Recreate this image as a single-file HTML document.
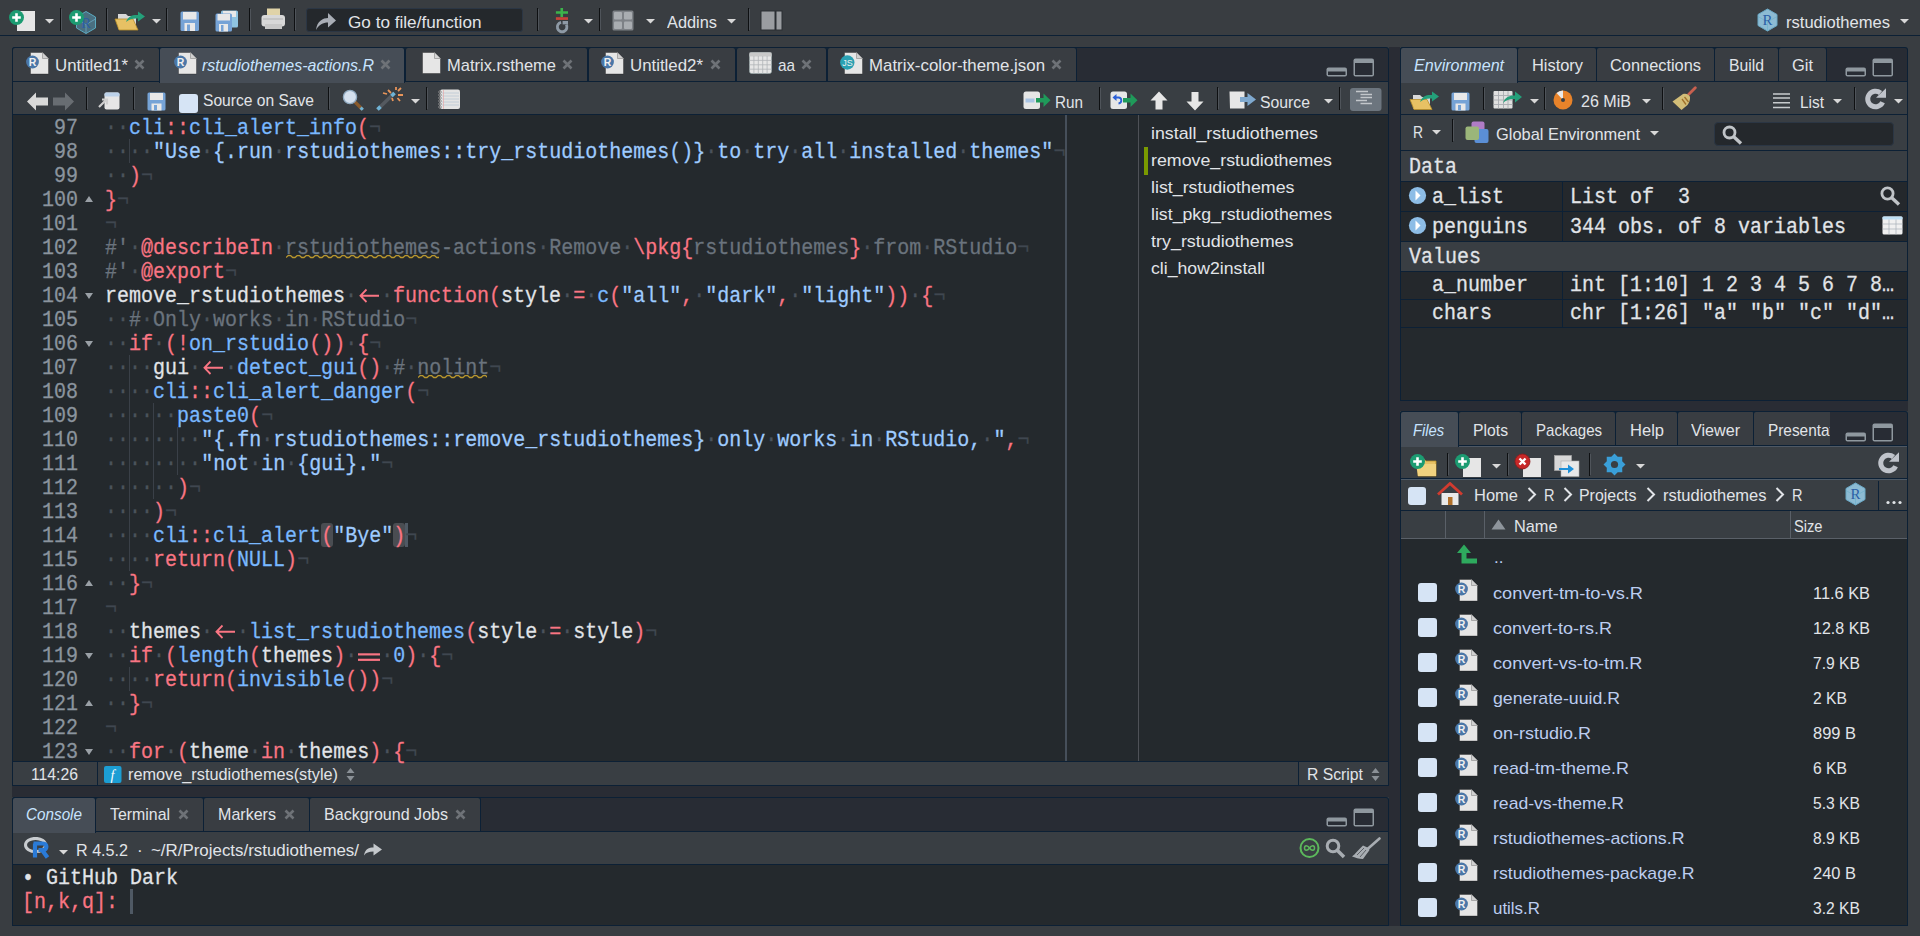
<!DOCTYPE html><html><head><meta charset="utf-8"><style>
*{margin:0;padding:0;box-sizing:border-box}
html,body{width:1920px;height:936px;overflow:hidden;background:#393d41}
body{position:relative;font-family:"Liberation Sans",sans-serif}
.a{position:absolute}
.tS{font-family:"Liberation Sans",sans-serif;white-space:pre;line-height:1}
.tM{font-family:"Liberation Mono",monospace;white-space:pre;line-height:1;transform:scaleY(1.09);transform-origin:0 17.3px;-webkit-text-stroke:0.25px currentColor}
.ln{position:absolute;z-index:1;height:24px;font-family:"Liberation Mono",monospace;font-size:20px;line-height:24px;padding-top:2px;white-space:pre;color:#e1e4e8;transform:scaleY(1.09);transform-origin:0 19px;-webkit-text-stroke:0.25px currentColor}
.w{color:#4a525b}
.r{color:#f97583}
.b{color:#79b8ff}
.s{color:#9ecbff}
.c{color:#6a737d}
.eol{color:#3f4750}
</style></head><body><div class="a" style="left:0px;top:35px;width:1920px;height:1px;background:#0c2035;"></div><div class="a" style="left:1389px;top:47px;width:11px;height:879px;background:#292c34;"></div><div class="a" style="left:12px;top:786px;width:1377px;height:11px;background:#292c34;"></div><div class="a" style="left:1400px;top:401px;width:508px;height:10px;background:#292c34;"></div><div class="a" style="left:12px;top:47px;width:1377px;height:739px;background:#0c2035;border-radius:3px 3px 0 0"></div><div class="a" style="left:13px;top:48px;width:1375px;height:33px;background:#282c34;border-radius:2px 2px 0 0"></div><div class="a" style="left:13px;top:82px;width:1375px;height:32px;background:#393e43;"></div><div class="a" style="left:13px;top:115px;width:1375px;height:646px;background:#24292d;"></div><div class="a" style="left:13px;top:762px;width:1375px;height:23px;background:#393e43;"></div><div class="a" style="left:12px;top:797px;width:1377px;height:129px;background:#0c2035;border-radius:3px 3px 0 0"></div><div class="a" style="left:13px;top:798px;width:1375px;height:33px;background:#282c34;border-radius:2px 2px 0 0"></div><div class="a" style="left:13px;top:832px;width:1375px;height:32px;background:#393e43;"></div><div class="a" style="left:13px;top:865px;width:1375px;height:60px;background:#24292d;"></div><div class="a" style="left:1400px;top:47px;width:508px;height:354px;background:#0c2035;border-radius:3px 3px 0 0"></div><div class="a" style="left:1401px;top:48px;width:506px;height:33px;background:#282c34;border-radius:2px 2px 0 0"></div><div class="a" style="left:1401px;top:82px;width:506px;height:32px;background:#393e43;"></div><div class="a" style="left:1401px;top:115px;width:506px;height:35px;background:#393e43;"></div><div class="a" style="left:1401px;top:151px;width:506px;height:249px;background:#24292d;"></div><div class="a" style="left:1400px;top:411px;width:508px;height:515px;background:#0c2035;border-radius:3px 3px 0 0"></div><div class="a" style="left:1401px;top:412px;width:506px;height:33px;background:#282c34;border-radius:2px 2px 0 0"></div><div class="a" style="left:1401px;top:447px;width:506px;height:31px;background:#393e43;"></div><div class="a" style="left:1401px;top:480px;width:506px;height:30px;background:#393e43;"></div><div class="a" style="left:1401px;top:511px;width:506px;height:27px;background:#393e43;"></div><div class="a" style="left:1401px;top:539px;width:506px;height:386px;background:#24292d;"></div><div class="a" style="left:1065px;top:115px;width:2px;height:646px;background:#464f5a;"></div><div class="a" style="left:1138px;top:115px;width:1px;height:646px;background:#4e5157;"></div><div class="ln" style="left:18px;top:115px;width:60px;text-align:right;color:#8b949e">97</div><div class="ln" style="left:105px;top:115px"><span class="w">·</span><span class="w">·</span><span class="b">cli</span><span class="r">::</span><span class="b">cli_alert_info</span><span class="r">(</span><span class="eol">¬</span></div><div class="ln" style="left:18px;top:139px;width:60px;text-align:right;color:#8b949e">98</div><div class="ln" style="left:105px;top:139px"><span class="w">·</span><span class="w">·</span><span class="w">·</span><span class="w">·</span><span class="s">&quot;Use</span><span class="w">·</span><span class="s">{.run</span><span class="w">·</span><span class="s">rstudiothemes::try_rstudiothemes()}</span><span class="w">·</span><span class="s">to</span><span class="w">·</span><span class="s">try</span><span class="w">·</span><span class="s">all</span><span class="w">·</span><span class="s">installed</span><span class="w">·</span><span class="s">themes&quot;</span><span class="eol">¬</span></div><div class="ln" style="left:18px;top:163px;width:60px;text-align:right;color:#8b949e">99</div><div class="ln" style="left:105px;top:163px"><span class="w">·</span><span class="w">·</span><span class="r">)</span><span class="eol">¬</span></div><div class="ln" style="left:18px;top:187px;width:60px;text-align:right;color:#8b949e">100</div><div class="ln" style="left:105px;top:187px"><span class="r">}</span><span class="eol">¬</span></div><div class="ln" style="left:18px;top:211px;width:60px;text-align:right;color:#8b949e">101</div><div class="ln" style="left:105px;top:211px"><span class="eol">¬</span></div><div class="ln" style="left:18px;top:235px;width:60px;text-align:right;color:#8b949e">102</div><div class="ln" style="left:105px;top:235px"><span class="c">#&#x27;</span><span class="w">·</span><span class="r">@describeIn</span><span class="w">·</span><span class="c">rstudiothemes-actions</span><span class="w">·</span><span class="c">Remove</span><span class="w">·</span><span class="r">\pkg{</span><span class="c">rstudiothemes</span><span class="r">}</span><span class="w">·</span><span class="c">from</span><span class="w">·</span><span class="c">RStudio</span><span class="eol">¬</span></div><div class="ln" style="left:18px;top:259px;width:60px;text-align:right;color:#8b949e">103</div><div class="ln" style="left:105px;top:259px"><span class="c">#&#x27;</span><span class="w">·</span><span class="r">@export</span><span class="eol">¬</span></div><div class="ln" style="left:18px;top:283px;width:60px;text-align:right;color:#8b949e">104</div><div class="ln" style="left:105px;top:283px">remove_rstudiothemes<span class="w">·</span><span style="display:inline-block;width:24px;height:24px;position:relative;vertical-align:top"><svg width="24" height="24" style="position:absolute;left:0px;top:0" viewBox="0 0 24 24"><path d="M3.5 11.3H22M9.5 5.6L3.5 11.3L9.5 17" stroke="#f97583" stroke-width="1.8" fill="none"/></svg></span><span class="w">·</span><span class="r">function</span><span class="r">(</span>style<span class="w">·</span><span class="r">=</span><span class="w">·</span><span class="b">c</span><span class="r">(</span><span class="s">&quot;all&quot;</span><span class="r">,</span><span class="w">·</span><span class="s">&quot;dark&quot;</span><span class="r">,</span><span class="w">·</span><span class="s">&quot;light&quot;</span><span class="r">)</span><span class="r">)</span><span class="w">·</span><span class="r">{</span><span class="eol">¬</span></div><div class="ln" style="left:18px;top:307px;width:60px;text-align:right;color:#8b949e">105</div><div class="ln" style="left:105px;top:307px"><span class="w">·</span><span class="w">·</span><span class="c">#</span><span class="w">·</span><span class="c">Only</span><span class="w">·</span><span class="c">works</span><span class="w">·</span><span class="c">in</span><span class="w">·</span><span class="c">RStudio</span><span class="eol">¬</span></div><div class="ln" style="left:18px;top:331px;width:60px;text-align:right;color:#8b949e">106</div><div class="ln" style="left:105px;top:331px"><span class="w">·</span><span class="w">·</span><span class="r">if</span><span class="w">·</span><span class="r">(</span><span class="r">!</span><span class="b">on_rstudio</span><span class="r">(</span><span class="r">)</span><span class="r">)</span><span class="w">·</span><span class="r">{</span><span class="eol">¬</span></div><div class="ln" style="left:18px;top:355px;width:60px;text-align:right;color:#8b949e">107</div><div class="ln" style="left:105px;top:355px"><span class="w">·</span><span class="w">·</span><span class="w">·</span><span class="w">·</span>gui<span class="w">·</span><span style="display:inline-block;width:24px;height:24px;position:relative;vertical-align:top"><svg width="24" height="24" style="position:absolute;left:0px;top:0" viewBox="0 0 24 24"><path d="M3.5 11.3H22M9.5 5.6L3.5 11.3L9.5 17" stroke="#f97583" stroke-width="1.8" fill="none"/></svg></span><span class="w">·</span><span class="b">detect_gui</span><span class="r">(</span><span class="r">)</span><span class="w">·</span><span class="c">#</span><span class="w">·</span><span class="c">nolint</span><span class="eol">¬</span></div><div class="ln" style="left:18px;top:379px;width:60px;text-align:right;color:#8b949e">108</div><div class="ln" style="left:105px;top:379px"><span class="w">·</span><span class="w">·</span><span class="w">·</span><span class="w">·</span><span class="b">cli</span><span class="r">::</span><span class="b">cli_alert_danger</span><span class="r">(</span><span class="eol">¬</span></div><div class="ln" style="left:18px;top:403px;width:60px;text-align:right;color:#8b949e">109</div><div class="ln" style="left:105px;top:403px"><span class="w">·</span><span class="w">·</span><span class="w">·</span><span class="w">·</span><span class="w">·</span><span class="w">·</span><span class="b">paste0</span><span class="r">(</span><span class="eol">¬</span></div><div class="ln" style="left:18px;top:427px;width:60px;text-align:right;color:#8b949e">110</div><div class="ln" style="left:105px;top:427px"><span class="w">·</span><span class="w">·</span><span class="w">·</span><span class="w">·</span><span class="w">·</span><span class="w">·</span><span class="w">·</span><span class="w">·</span><span class="s">&quot;{.fn</span><span class="w">·</span><span class="s">rstudiothemes::remove_rstudiothemes}</span><span class="w">·</span><span class="s">only</span><span class="w">·</span><span class="s">works</span><span class="w">·</span><span class="s">in</span><span class="w">·</span><span class="s">RStudio,</span><span class="w">·</span><span class="s">&quot;</span><span class="r">,</span><span class="eol">¬</span></div><div class="ln" style="left:18px;top:451px;width:60px;text-align:right;color:#8b949e">111</div><div class="ln" style="left:105px;top:451px"><span class="w">·</span><span class="w">·</span><span class="w">·</span><span class="w">·</span><span class="w">·</span><span class="w">·</span><span class="w">·</span><span class="w">·</span><span class="s">&quot;not</span><span class="w">·</span><span class="s">in</span><span class="w">·</span><span class="s">{gui}.&quot;</span><span class="eol">¬</span></div><div class="ln" style="left:18px;top:475px;width:60px;text-align:right;color:#8b949e">112</div><div class="ln" style="left:105px;top:475px"><span class="w">·</span><span class="w">·</span><span class="w">·</span><span class="w">·</span><span class="w">·</span><span class="w">·</span><span class="r">)</span><span class="eol">¬</span></div><div class="ln" style="left:18px;top:499px;width:60px;text-align:right;color:#8b949e">113</div><div class="ln" style="left:105px;top:499px"><span class="w">·</span><span class="w">·</span><span class="w">·</span><span class="w">·</span><span class="r">)</span><span class="eol">¬</span></div><div class="ln" style="left:18px;top:523px;width:60px;text-align:right;color:#8b949e">114</div><div class="ln" style="left:105px;top:523px"><span class="w">·</span><span class="w">·</span><span class="w">·</span><span class="w">·</span><span class="b">cli</span><span class="r">::</span><span class="b">cli_alert</span><span class="r">(</span><span class="s">&quot;Bye&quot;</span><span class="r">)</span><span class="eol">¬</span></div><div class="ln" style="left:18px;top:547px;width:60px;text-align:right;color:#8b949e">115</div><div class="ln" style="left:105px;top:547px"><span class="w">·</span><span class="w">·</span><span class="w">·</span><span class="w">·</span><span class="r">return</span><span class="r">(</span><span class="b">NULL</span><span class="r">)</span><span class="eol">¬</span></div><div class="ln" style="left:18px;top:571px;width:60px;text-align:right;color:#8b949e">116</div><div class="ln" style="left:105px;top:571px"><span class="w">·</span><span class="w">·</span><span class="r">}</span><span class="eol">¬</span></div><div class="ln" style="left:18px;top:595px;width:60px;text-align:right;color:#8b949e">117</div><div class="ln" style="left:105px;top:595px"><span class="eol">¬</span></div><div class="ln" style="left:18px;top:619px;width:60px;text-align:right;color:#8b949e">118</div><div class="ln" style="left:105px;top:619px"><span class="w">·</span><span class="w">·</span>themes<span class="w">·</span><span style="display:inline-block;width:24px;height:24px;position:relative;vertical-align:top"><svg width="24" height="24" style="position:absolute;left:0px;top:0" viewBox="0 0 24 24"><path d="M3.5 11.3H22M9.5 5.6L3.5 11.3L9.5 17" stroke="#f97583" stroke-width="1.8" fill="none"/></svg></span><span class="w">·</span><span class="b">list_rstudiothemes</span><span class="r">(</span>style<span class="w">·</span><span class="r">=</span><span class="w">·</span>style<span class="r">)</span><span class="eol">¬</span></div><div class="ln" style="left:18px;top:643px;width:60px;text-align:right;color:#8b949e">119</div><div class="ln" style="left:105px;top:643px"><span class="w">·</span><span class="w">·</span><span class="r">if</span><span class="w">·</span><span class="r">(</span><span class="b">length</span><span class="r">(</span>themes<span class="r">)</span><span class="w">·</span><span style="display:inline-block;width:24px;height:24px;position:relative;vertical-align:top"><div style="position:absolute;left:0px;top:0;width:24px;height:24px"><div style="position:absolute;left:1px;top:9px;width:22px;height:2px;background:#f97583"></div><div style="position:absolute;left:1px;top:13.5px;width:22px;height:2px;background:#f97583"></div></div></span><span class="w">·</span><span class="b">0</span><span class="r">)</span><span class="w">·</span><span class="r">{</span><span class="eol">¬</span></div><div class="ln" style="left:18px;top:667px;width:60px;text-align:right;color:#8b949e">120</div><div class="ln" style="left:105px;top:667px"><span class="w">·</span><span class="w">·</span><span class="w">·</span><span class="w">·</span><span class="r">return</span><span class="r">(</span><span class="b">invisible</span><span class="r">(</span><span class="r">)</span><span class="r">)</span><span class="eol">¬</span></div><div class="ln" style="left:18px;top:691px;width:60px;text-align:right;color:#8b949e">121</div><div class="ln" style="left:105px;top:691px"><span class="w">·</span><span class="w">·</span><span class="r">}</span><span class="eol">¬</span></div><div class="ln" style="left:18px;top:715px;width:60px;text-align:right;color:#8b949e">122</div><div class="ln" style="left:105px;top:715px"><span class="eol">¬</span></div><div class="ln" style="left:18px;top:739px;width:60px;text-align:right;color:#8b949e">123</div><div class="ln" style="left:105px;top:739px"><span class="w">·</span><span class="w">·</span><span class="r">for</span><span class="w">·</span><span class="r">(</span>theme<span class="w">·</span><span class="r">in</span><span class="w">·</span>themes<span class="r">)</span><span class="w">·</span><span class="r">{</span><span class="eol">¬</span></div><svg class="a" style="left:84px;top:195px" width="10" height="8"><path d="M1 7L5 1L9 7Z" fill="#9aa0a6"/></svg><svg class="a" style="left:84px;top:292px" width="10" height="8"><path d="M1 1L5 7L9 1Z" fill="#9aa0a6"/></svg><svg class="a" style="left:84px;top:340px" width="10" height="8"><path d="M1 1L5 7L9 1Z" fill="#9aa0a6"/></svg><svg class="a" style="left:84px;top:579px" width="10" height="8"><path d="M1 7L5 1L9 7Z" fill="#9aa0a6"/></svg><svg class="a" style="left:84px;top:652px" width="10" height="8"><path d="M1 1L5 7L9 1Z" fill="#9aa0a6"/></svg><svg class="a" style="left:84px;top:699px" width="10" height="8"><path d="M1 7L5 1L9 7Z" fill="#9aa0a6"/></svg><svg class="a" style="left:84px;top:748px" width="10" height="8"><path d="M1 1L5 7L9 1Z" fill="#9aa0a6"/></svg><div class="a" style="left:129px;top:139px;width:1px;height:24px;background:#3a4048;"></div><div class="a" style="left:129px;top:355px;width:1px;height:216px;background:#3a4048;"></div><div class="a" style="left:153px;top:403px;width:1px;height:96px;background:#3a4048;"></div><div class="a" style="left:177px;top:427px;width:1px;height:48px;background:#3a4048;"></div><div class="a" style="left:129px;top:667px;width:1px;height:24px;background:#3a4048;"></div><div class="a" style="left:321px;top:523px;width:12px;height:24px;background:#4a4d52;border-radius:3px"></div><div class="a" style="left:393px;top:523px;width:12px;height:24px;background:#4a4d52;border-radius:3px"></div><div class="a" style="left:405px;top:523px;width:3px;height:24px;background:#4f5964;"></div><svg class="a" style="left:286px;top:255px" width="153" height="4"><path d="M0 2.5 L2.25 0.5 L4.50 0.5 L6.75 2.5 L9.00 2.5 L11.25 0.5 L13.50 0.5 L15.75 2.5 L18.00 2.5 L20.25 0.5 L22.50 0.5 L24.75 2.5 L27.00 2.5 L29.25 0.5 L31.50 0.5 L33.75 2.5 L36.00 2.5 L38.25 0.5 L40.50 0.5 L42.75 2.5 L45.00 2.5 L47.25 0.5 L49.50 0.5 L51.75 2.5 L54.00 2.5 L56.25 0.5 L58.50 0.5 L60.75 2.5 L63.00 2.5 L65.25 0.5 L67.50 0.5 L69.75 2.5 L72.00 2.5 L74.25 0.5 L76.50 0.5 L78.75 2.5 L81.00 2.5 L83.25 0.5 L85.50 0.5 L87.75 2.5 L90.00 2.5 L92.25 0.5 L94.50 0.5 L96.75 2.5 L99.00 2.5 L101.25 0.5 L103.50 0.5 L105.75 2.5 L108.00 2.5 L110.25 0.5 L112.50 0.5 L114.75 2.5 L117.00 2.5 L119.25 0.5 L121.50 0.5 L123.75 2.5 L126.00 2.5 L128.25 0.5 L130.50 0.5 L132.75 2.5 L135.00 2.5 L137.25 0.5 L139.50 0.5 L141.75 2.5 L144.00 2.5 L146.25 0.5 L148.50 0.5 L150.75 2.5 L153.00 2.5" stroke="#b8962e" stroke-width="1.3" fill="none"/></svg><svg class="a" style="left:418px;top:375px" width="69" height="4"><path d="M0 2.5 L2.25 0.5 L4.50 0.5 L6.75 2.5 L9.00 2.5 L11.25 0.5 L13.50 0.5 L15.75 2.5 L18.00 2.5 L20.25 0.5 L22.50 0.5 L24.75 2.5 L27.00 2.5 L29.25 0.5 L31.50 0.5 L33.75 2.5 L36.00 2.5 L38.25 0.5 L40.50 0.5 L42.75 2.5 L45.00 2.5 L47.25 0.5 L49.50 0.5 L51.75 2.5 L54.00 2.5 L56.25 0.5 L58.50 0.5 L60.75 2.5 L63.00 2.5 L65.25 0.5 L67.50 0.5 L69.75 2.5 L72.00 2.5" stroke="#b8962e" stroke-width="1.3" fill="none"/></svg><div class="a tS" style="left:1151px;top:125.11px;font-size:17px;color:#e1e4e8;transform:scaleX(1.0458);transform-origin:0 0;">install_rstudiothemes</div><div class="a tS" style="left:1151px;top:152.11px;font-size:17px;color:#e1e4e8;transform:scaleX(1.0468);transform-origin:0 0;">remove_rstudiothemes</div><div class="a tS" style="left:1151px;top:179.11px;font-size:17px;color:#e1e4e8;transform:scaleX(1.0474);transform-origin:0 0;">list_rstudiothemes</div><div class="a tS" style="left:1151px;top:206.11px;font-size:17px;color:#e1e4e8;transform:scaleX(1.0410);transform-origin:0 0;">list_pkg_rstudiothemes</div><div class="a tS" style="left:1151px;top:233.11px;font-size:17px;color:#e1e4e8;transform:scaleX(1.0547);transform-origin:0 0;">try_rstudiothemes</div><div class="a tS" style="left:1151px;top:260.11px;font-size:17px;color:#e1e4e8;transform:scaleX(1.0400);transform-origin:0 0;">cli_how2install</div><div class="a" style="left:1144px;top:147px;width:4px;height:28px;background:#7a9a01;"></div><div class="a" style="left:12px;top:47px;width:148px;height:35px;background:#0c2035;border-radius:3px 3px 0 0"></div><div class="a" style="left:13px;top:48px;width:146px;height:33px;background:#393d42;border-radius:2px 2px 0 0"></div><svg class="a" style="left:26px;top:52px;" width="24" height="23" viewBox="0 0 24 23"><path d="M4.5 0.5H16.5L22.5 6.5V22H4.5Z" fill="#e6e6e6" stroke="#1a1a1a" stroke-opacity="0.35"/><path d="M16.5 0.5V6.5H22.5" fill="#d0d0d0" stroke="#9a9a9a" stroke-width="0.8"/><circle cx="6.5" cy="10" r="6.4" fill="#4a77a8"/><text x="6.6000000000000005" y="13.78" font-family="Liberation Sans" font-size="10.5" font-weight="bold" fill="#f0f0f0" text-anchor="middle">R</text></svg><div class="a tS" style="left:55px;top:57.41px;font-size:17px;color:#e1e4e8;transform:scaleX(0.9904);transform-origin:0 0;">Untitled1*</div><svg class="a" style="left:134px;top:59px;" width="11" height="11" viewBox="0 0 11 11"><path d="M1.5 1.5L9.5 9.5M9.5 1.5L1.5 9.5" stroke="#6e7277" stroke-width="2.6"/></svg><div class="a" style="left:405px;top:47px;width:183px;height:35px;background:#0c2035;border-radius:3px 3px 0 0"></div><div class="a" style="left:406px;top:48px;width:181px;height:33px;background:#393d42;border-radius:2px 2px 0 0"></div><svg class="a" style="left:422px;top:52px;" width="20" height="23" viewBox="0 0 20 23"><path d="M0.5 0.5H12.5L18.5 6.5V21.5H0.5Z" fill="#e6e6e6" stroke="#202020" stroke-opacity="0.4"/><path d="M12.5 0.5V6.5H18.5" fill="#d6d6d6" stroke="#999" stroke-width="0.8"/></svg><div class="a tS" style="left:447px;top:57.41px;font-size:17px;color:#e1e4e8;transform:scaleX(0.9697);transform-origin:0 0;">Matrix.rstheme</div><svg class="a" style="left:562px;top:59px;" width="11" height="11" viewBox="0 0 11 11"><path d="M1.5 1.5L9.5 9.5M9.5 1.5L1.5 9.5" stroke="#6e7277" stroke-width="2.6"/></svg><div class="a" style="left:588px;top:47px;width:148px;height:35px;background:#0c2035;border-radius:3px 3px 0 0"></div><div class="a" style="left:589px;top:48px;width:146px;height:33px;background:#393d42;border-radius:2px 2px 0 0"></div><svg class="a" style="left:601px;top:52px;" width="24" height="23" viewBox="0 0 24 23"><path d="M4.5 0.5H16.5L22.5 6.5V22H4.5Z" fill="#e6e6e6" stroke="#1a1a1a" stroke-opacity="0.35"/><path d="M16.5 0.5V6.5H22.5" fill="#d0d0d0" stroke="#9a9a9a" stroke-width="0.8"/><circle cx="6.5" cy="10" r="6.4" fill="#4a77a8"/><text x="6.6000000000000005" y="13.78" font-family="Liberation Sans" font-size="10.5" font-weight="bold" fill="#f0f0f0" text-anchor="middle">R</text></svg><div class="a tS" style="left:630px;top:57.41px;font-size:17px;color:#e1e4e8;transform:scaleX(0.9904);transform-origin:0 0;">Untitled2*</div><svg class="a" style="left:710px;top:59px;" width="11" height="11" viewBox="0 0 11 11"><path d="M1.5 1.5L9.5 9.5M9.5 1.5L1.5 9.5" stroke="#6e7277" stroke-width="2.6"/></svg><div class="a" style="left:736px;top:47px;width:91px;height:35px;background:#0c2035;border-radius:3px 3px 0 0"></div><div class="a" style="left:737px;top:48px;width:89px;height:33px;background:#393d42;border-radius:2px 2px 0 0"></div><svg class="a" style="left:749px;top:52px;" width="24" height="23" viewBox="0 0 24 23"><rect x="0.5" y="0.5" width="22" height="21" rx="2" fill="#e6e6e6" stroke="#9aa" stroke-width="0.6"/><rect x="0.5" y="0.5" width="22" height="4" fill="#c9c9c9"/><path d="M4.9 4V21.5" stroke="#b0b4b8" stroke-width="0.8"/><path d="M9.3 4V21.5" stroke="#b0b4b8" stroke-width="0.8"/><path d="M13.7 4V21.5" stroke="#b0b4b8" stroke-width="0.8"/><path d="M18.1 4V21.5" stroke="#b0b4b8" stroke-width="0.8"/><path d="M0.5 8.4H22.5" stroke="#b0b4b8" stroke-width="0.8"/><path d="M0.5 12.8H22.5" stroke="#b0b4b8" stroke-width="0.8"/><path d="M0.5 17.2H22.5" stroke="#b0b4b8" stroke-width="0.8"/></svg><div class="a tS" style="left:778px;top:57.41px;font-size:17px;color:#e1e4e8;transform:scaleX(0.8990);transform-origin:0 0;">aa</div><svg class="a" style="left:801px;top:59px;" width="11" height="11" viewBox="0 0 11 11"><path d="M1.5 1.5L9.5 9.5M9.5 1.5L1.5 9.5" stroke="#6e7277" stroke-width="2.6"/></svg><div class="a" style="left:827px;top:47px;width:250px;height:35px;background:#0c2035;border-radius:3px 3px 0 0"></div><div class="a" style="left:828px;top:48px;width:248px;height:33px;background:#393d42;border-radius:2px 2px 0 0"></div><svg class="a" style="left:840px;top:52px;" width="24" height="23" viewBox="0 0 24 23"><path d="M4.5 0.5H16.5L22.5 6.5V22H4.5Z" fill="#e6e6e6" stroke="#1a1a1a" stroke-opacity="0.35"/><path d="M16.5 0.5V6.5H22.5" fill="#d0d0d0" stroke="#9a9a9a" stroke-width="0.8"/><circle cx="7.3" cy="10.5" r="7.2" fill="#2aa1b3"/><text x="7.4" y="13.74" font-family="Liberation Sans" font-size="9"  fill="#f0f0f0" text-anchor="middle">JS</text></svg><div class="a tS" style="left:869px;top:57.41px;font-size:17px;color:#e1e4e8;transform:scaleX(0.9910);transform-origin:0 0;">Matrix-color-theme.json</div><svg class="a" style="left:1051px;top:59px;" width="11" height="11" viewBox="0 0 11 11"><path d="M1.5 1.5L9.5 9.5M9.5 1.5L1.5 9.5" stroke="#6e7277" stroke-width="2.6"/></svg><div class="a" style="left:159px;top:47px;width:246px;height:36px;background:#0c2035;border-radius:3px 3px 0 0"></div><div class="a" style="left:160px;top:48px;width:244px;height:35px;background:#464d56;border-radius:2px 2px 0 0"></div><svg class="a" style="left:174px;top:52px;" width="24" height="23" viewBox="0 0 24 23"><path d="M4.5 0.5H16.5L22.5 6.5V22H4.5Z" fill="#e6e6e6" stroke="#1a1a1a" stroke-opacity="0.35"/><path d="M16.5 0.5V6.5H22.5" fill="#d0d0d0" stroke="#9a9a9a" stroke-width="0.8"/><circle cx="6.5" cy="10" r="6.4" fill="#4a77a8"/><text x="6.6000000000000005" y="13.78" font-family="Liberation Sans" font-size="10.5" font-weight="bold" fill="#f0f0f0" text-anchor="middle">R</text></svg><div class="a tS" style="left:202px;top:57.41px;font-size:17px;color:#c8e4ff;transform:scaleX(0.9384);transform-origin:0 0;font-style:italic;">rstudiothemes-actions.R</div><svg class="a" style="left:380px;top:59px;" width="11" height="11" viewBox="0 0 11 11"><path d="M1.5 1.5L9.5 9.5M9.5 1.5L1.5 9.5" stroke="#6e7277" stroke-width="2.6"/></svg><svg class="a" style="left:1326px;top:58px;" width="50" height="20" viewBox="0 0 50 20"><rect x="0.5" y="9.5" width="20.5" height="9" rx="2" fill="#8f989f"/><rect x="2" y="13.5" width="17.5" height="3.5" fill="#282c34"/><rect x="27.5" y="0.5" width="20.5" height="18" rx="2" fill="#8f989f"/><rect x="29" y="5" width="17.5" height="12" fill="#282c34"/></svg><svg class="a" style="left:27px;top:92px;" width="22" height="19" viewBox="0 0 22 19"><path d="M0 9.5L9 0.5V5.5H21V13.5H9V18.5Z" fill="#d9d9d9"/></svg><svg class="a" style="left:53px;top:92px;" width="22" height="19" viewBox="0 0 22 19"><path d="M21 9.5L12 0.5V5.5H0V13.5H12V18.5Z" fill="#686d72"/></svg><div class="a" style="left:86px;top:87px;width:1px;height:23px;background:#0e1012;"></div><div class="a" style="left:87px;top:88px;width:1px;height:21px;background:#4f545a;"></div><svg class="a" style="left:98px;top:92px;" width="23" height="18" viewBox="0 0 23 18"><rect x="6.5" y="0.5" width="15" height="17" rx="2" fill="#e6e6e6"/><rect x="6.5" y="0.5" width="15" height="4" rx="1.5" fill="#bcd2ea"/><path d="M1 15L8 8M4 7.5H9V12.5" stroke="#cfcfcf" stroke-width="2.2" fill="none"/></svg><div class="a" style="left:133px;top:87px;width:1px;height:23px;background:#0e1012;"></div><div class="a" style="left:134px;top:88px;width:1px;height:21px;background:#4f545a;"></div><svg class="a" style="left:147px;top:92px;" width="19" height="19" viewBox="0 0 19 19"><rect x="0.5" y="0.5" width="18" height="18" rx="1.5" fill="#76a3d6"/><rect x="3" y="1" width="13" height="7" fill="#e8e8e8"/><rect x="4.5" y="11.5" width="10" height="7" fill="#e8e8e8"/><rect x="7" y="13" width="3" height="5.5" fill="#76a3d6"/></svg><div class="a" style="left:179px;top:94px;width:19px;height:19px;background:#d6e4f5;border-radius:3px"></div><div class="a tS" style="left:203px;top:93.26px;font-size:16px;color:#e1e4e8;transform:scaleX(0.9750);transform-origin:0 0;">Source on Save</div><div class="a" style="left:328px;top:87px;width:1px;height:23px;background:#0e1012;"></div><div class="a" style="left:329px;top:88px;width:1px;height:21px;background:#4f545a;"></div><svg class="a" style="left:342px;top:89px;" width="24" height="23" viewBox="0 0 24 23"><path d="M12.5 12.5L20.5 20.5" stroke="#8a5a2b" stroke-width="3.2"/><path d="M18.6 18.6L20.8 20.8" stroke="#6fb3d6" stroke-width="3"/><circle cx="8" cy="8" r="6.6" fill="#d4e0ee" stroke="#8fa9c0" stroke-width="1.3"/></svg><svg class="a" style="left:375px;top:86px;" width="30" height="26" viewBox="0 0 30 26"><path d="M2.5 23.5L19.5 7" stroke="#555a60" stroke-width="3.6"/><path d="M2.5 23.5L5.5 20.6" stroke="#6fb3d6" stroke-width="3.6"/><path d="M16.5 10L19.5 7" stroke="#6fb3d6" stroke-width="3.6"/><g stroke="#e8955a" stroke-width="1.8"><path d="M13 4L16 7M21 1V4M26 2L23 5M23 9H28M22.5 12L25 15M17 12L18 15M8 7L12 8"/></g></svg><svg class="a" style="left:411px;top:99px;" width="9" height="5" viewBox="0 0 9 5"><path d="M0 0H9L4.5 4.5Z" fill="#d8d8d8"/></svg><div class="a" style="left:426px;top:87px;width:1px;height:23px;background:#0e1012;"></div><div class="a" style="left:427px;top:88px;width:1px;height:21px;background:#4f545a;"></div><svg class="a" style="left:438px;top:89px;" width="23" height="21" viewBox="0 0 23 21"><rect x="2" y="0.5" width="20" height="19.5" rx="2" fill="#e4e4e4"/><g stroke="#b9c6d3" stroke-width="0.8"><path d="M4 4H21M4 7H21M4 10H21M4 13H21M4 16H21"/></g><path d="M5.5 1V20" stroke="#e8a0a0" stroke-width="0.6"/><g fill="none" stroke="#8a8a8a" stroke-width="0.9"><circle cx="2" cy="3" r="1.3"/><circle cx="2" cy="6" r="1.3"/><circle cx="2" cy="9" r="1.3"/><circle cx="2" cy="12" r="1.3"/><circle cx="2" cy="15" r="1.3"/><circle cx="2" cy="18" r="1.3"/></g></svg><svg class="a" style="left:1023px;top:91px;" width="28" height="19" viewBox="0 0 28 19"><rect x="0.5" y="0.5" width="16.5" height="17.5" rx="2.5" fill="#e6e6e6"/><rect x="2.5" y="7.5" width="9" height="4" fill="#a9c4e4"/><path d="M13 7H20.5V2.5L27.5 9.3L20.5 16V11.5H13Z" fill="#1f9a5a"/></svg><div class="a tS" style="left:1055px;top:94.76px;font-size:16px;color:#e1e4e8;transform:scaleX(0.9540);transform-origin:0 0;">Run</div><div class="a" style="left:1099px;top:87px;width:1px;height:23px;background:#0e1012;"></div><div class="a" style="left:1100px;top:88px;width:1px;height:21px;background:#4f545a;"></div><svg class="a" style="left:1110px;top:91px;" width="28" height="19" viewBox="0 0 28 19"><rect x="0.5" y="0.5" width="16.5" height="17.5" rx="2.5" fill="#e6e6e6"/><path d="M4 6.5H8.5C12 6.5 12.5 12 8.5 12.5" stroke="#2a5fd6" stroke-width="1.8" fill="none"/><path d="M2.5 6.5L6.5 3V10Z" fill="#2a5fd6"/><path d="M13 7H20.5V2.5L27.5 9.3L20.5 16V11.5H13Z" fill="#1f9a5a"/></svg><svg class="a" style="left:1150px;top:91px;" width="18" height="19" viewBox="0 0 18 19"><path d="M9 0.5L17.5 9.5H12.5V18.5H5.5V9.5H0.5Z" fill="#e6e6e6"/></svg><svg class="a" style="left:1186px;top:91px;" width="18" height="20" viewBox="0 0 18 20"><path d="M9 19.5L17.5 10.5H12.5V1H5.5V10.5H0.5Z" fill="#e6e6e6"/></svg><div class="a" style="left:1217px;top:87px;width:1px;height:23px;background:#0e1012;"></div><div class="a" style="left:1218px;top:88px;width:1px;height:21px;background:#4f545a;"></div><svg class="a" style="left:1229px;top:91px;" width="28" height="18" viewBox="0 0 28 18"><path d="M0.5 0.5H15.5V17.5H1Z" fill="#e6e6e6"/><path d="M11 6H18.5V2L27 8.5L18.5 15V11H11Z" fill="#7fa9cf"/></svg><div class="a tS" style="left:1260px;top:94.76px;font-size:16px;color:#e1e4e8;transform:scaleX(0.9863);transform-origin:0 0;">Source</div><svg class="a" style="left:1324px;top:99px;" width="9" height="5" viewBox="0 0 9 5"><path d="M0 0H9L4.5 4.5Z" fill="#d8d8d8"/></svg><div class="a" style="left:1339px;top:87px;width:1px;height:23px;background:#0e1012;"></div><div class="a" style="left:1340px;top:88px;width:1px;height:21px;background:#4f545a;"></div><svg class="a" style="left:1350px;top:88px;" width="32" height="23" viewBox="0 0 32 23"><rect x="0" y="0" width="31.5" height="23" rx="3" fill="#6c757e"/><g stroke="#c3c7cb" stroke-width="1.4"><path d="M6 3.5H18M10.5 6.5H22M10.5 9.5H22M6 12.5H17M10.5 15.5H22"/></g></svg><div class="a tS" style="left:31px;top:767.26px;font-size:16px;color:#e1e4e8;transform:scaleX(0.9843);transform-origin:0 0;">114:26</div><div class="a" style="left:97px;top:762px;width:1px;height:23px;background:#0c2035;"></div><svg class="a" style="left:104px;top:766px;" width="18" height="17" viewBox="0 0 18 17"><rect x="0" y="0" width="17.5" height="17" rx="2" fill="#1c9ed4"/><text x="8.5" y="13.5" font-family="Liberation Serif" font-style="italic" font-size="14" fill="#fff" text-anchor="middle">f</text></svg><div class="a tS" style="left:128px;top:767.26px;font-size:16px;color:#e1e4e8;transform:scaleX(1.0180);transform-origin:0 0;">remove_rstudiothemes(style)</div><svg class="a" style="left:346px;top:767px;" width="9" height="15" viewBox="0 0 9 15"><path d="M0.5 6L4.5 1L8.5 6ZM0.5 9L4.5 14L8.5 9Z" fill="#8a9096"/></svg><div class="a" style="left:1298px;top:762px;width:1px;height:23px;background:#0c2035;"></div><div class="a tS" style="left:1307px;top:767.26px;font-size:16px;color:#e1e4e8;transform:scaleX(0.9842);transform-origin:0 0;">R Script</div><svg class="a" style="left:1371px;top:767px;" width="9" height="15" viewBox="0 0 9 15"><path d="M0.5 6L4.5 1L8.5 6ZM0.5 9L4.5 14L8.5 9Z" fill="#8a9096"/></svg><svg class="a" style="left:8px;top:9px;" width="30" height="24" viewBox="0 0 30 24"><rect x="9" y="2" width="18" height="20" fill="#e6e6e6"/><circle cx="8.5" cy="8.5" r="7.5" fill="#1c9c72"/><path d="M4.2 8.5H12.8M8.5 4.2V12.8" stroke="#fff" stroke-width="2.6"/></svg><svg class="a" style="left:45px;top:19px;" width="9" height="5" viewBox="0 0 9 5"><path d="M0 0H9L4.5 4.5Z" fill="#d8d8d8"/></svg><div class="a" style="left:60px;top:8px;width:1px;height:23px;background:#0e1012;"></div><div class="a" style="left:61px;top:9px;width:1px;height:21px;background:#4f545a;"></div><svg class="a" style="left:67px;top:9px;" width="34" height="27" viewBox="0 0 34 27"><polygon points="19.0,2.5 9.5,8.0 9.5,19.0 19.0,24.5 28.5,19.0 28.5,8.0" fill="#4a6f80" stroke="#5aaac0" stroke-width="1"/><path d="M19 15.5L9.5 10.0M19 15.5L28.5 10.0M19 15.5V24.5" stroke="#6fb0cc" stroke-width="0.7"/><text x="19" y="18.5" font-family="Liberation Serif" font-size="15.0" fill="#2b5fa5" text-anchor="middle">R</text><circle cx="9.5" cy="8.5" r="7.5" fill="#1c9c72"/><path d="M5.2 8.5H13.8M9.5 4.2V12.8" stroke="#fff" stroke-width="2.6"/></svg><div class="a" style="left:106px;top:8px;width:1px;height:23px;background:#0e1012;"></div><div class="a" style="left:107px;top:9px;width:1px;height:21px;background:#4f545a;"></div><svg class="a" style="left:114px;top:10px;" width="34" height="22" viewBox="0 0 34 22"><path d="M4 4H12L14 6H22V19H4Z" fill="#d8d8d8"/><path d="M1 9H19L24 20H5Z" fill="#e7c164" stroke="#b98f2a" stroke-width="0.8"/><path d="M12 12C14 6 19 4.5 24 5V1.5L31 6.5L24 11.5V8.5C20 8 15 9 12 12Z" fill="#24a07a"/></svg><svg class="a" style="left:152px;top:19px;" width="9" height="5" viewBox="0 0 9 5"><path d="M0 0H9L4.5 4.5Z" fill="#d8d8d8"/></svg><div class="a" style="left:166px;top:8px;width:1px;height:23px;background:#0e1012;"></div><div class="a" style="left:167px;top:9px;width:1px;height:21px;background:#4f545a;"></div><svg class="a" style="left:180px;top:11px;" width="20" height="21" viewBox="0 0 20 21"><rect x="0.5" y="0.5" width="18.5" height="19.5" rx="1.5" fill="#76a3d6"/><rect x="3" y="1" width="13.5" height="7.5" fill="#e8e8e8"/><rect x="4.5" y="12" width="10.5" height="8" fill="#e8e8e8"/><rect x="7" y="13.5" width="3" height="6.5" fill="#76a3d6"/></svg><svg class="a" style="left:215px;top:10px;" width="24" height="22" viewBox="0 0 24 22"><rect x="6" y="0.5" width="17" height="17" rx="1.5" fill="#8fc3e0"/><rect x="8" y="1" width="13" height="6" fill="#e8e8e8"/><rect x="0.5" y="3.5" width="16.5" height="18" rx="1.5" fill="#76a3d6"/><rect x="2.5" y="4" width="12.5" height="6.5" fill="#e8e8e8"/><rect x="4" y="14" width="9" height="7.5" fill="#e8e8e8"/><rect x="6" y="15" width="2.5" height="6.5" fill="#76a3d6"/></svg><div class="a" style="left:249px;top:8px;width:1px;height:23px;background:#0e1012;"></div><div class="a" style="left:250px;top:9px;width:1px;height:21px;background:#4f545a;"></div><svg class="a" style="left:261px;top:8px;" width="25" height="22" viewBox="0 0 25 22"><rect x="6" y="0.5" width="13" height="9" fill="#e0d3a8"/><rect x="0.5" y="7" width="23.5" height="11.5" rx="3" fill="#d8d8d8"/><rect x="4" y="16" width="17" height="5" fill="#c8c8c8"/><path d="M2 11H22" stroke="#aaa" stroke-width="0.8"/></svg><div class="a" style="left:294px;top:8px;width:1px;height:23px;background:#0e1012;"></div><div class="a" style="left:295px;top:9px;width:1px;height:21px;background:#4f545a;"></div><div class="a" style="left:306px;top:8px;width:217px;height:24px;background:#24282c;border:1px solid #2b3644;border-radius:3px"></div><svg class="a" style="left:315px;top:11px;" width="22" height="20" viewBox="0 0 22 20"><path d="M1 19C2 10 8 7 13 7V2L21 9.5L13 16.5V11.5C8 11.5 4 13.5 1 19Z" fill="#a9aeb6"/></svg><div class="a tS" style="left:348px;top:13.91px;font-size:17px;color:#e1e4e8;transform:scaleX(1.0091);transform-origin:0 0;">Go to file/function</div><div class="a" style="left:537px;top:8px;width:1px;height:23px;background:#0e1012;"></div><div class="a" style="left:538px;top:9px;width:1px;height:21px;background:#4f545a;"></div><svg class="a" style="left:554px;top:8px;" width="16" height="26" viewBox="0 0 16 26"><path d="M1.9 4.5H14M7.75 0V8.9" stroke="#3cb44b" stroke-width="2.6"/><rect x="1.9" y="9.2" width="12.1" height="2.7" fill="#c9443a"/><path d="M7.1 14.3A4.8 4.8 0 1 0 12.3 16.6" fill="none" stroke="#8e9aa6" stroke-width="2.9"/><rect x="8.6" y="13" width="5.4" height="3.4" fill="#8e9aa6"/></svg><svg class="a" style="left:584px;top:19px;" width="9" height="5" viewBox="0 0 9 5"><path d="M0 0H9L4.5 4.5Z" fill="#d8d8d8"/></svg><div class="a" style="left:599px;top:8px;width:1px;height:23px;background:#0e1012;"></div><div class="a" style="left:600px;top:9px;width:1px;height:21px;background:#4f545a;"></div><svg class="a" style="left:612px;top:10px;" width="22" height="21" viewBox="0 0 22 21"><rect x="0.5" y="0.5" width="21" height="20" rx="1.5" fill="#7d8186"/><rect x="2" y="2" width="8" height="7.5" rx="1" fill="#a9adb1"/><rect x="12" y="2" width="8" height="7.5" rx="1" fill="#a9adb1"/><rect x="2" y="11.5" width="8" height="7.5" rx="1" fill="#a9adb1"/><rect x="12" y="11.5" width="8" height="7.5" rx="1" fill="#a9adb1"/></svg><svg class="a" style="left:646px;top:19px;" width="9" height="5" viewBox="0 0 9 5"><path d="M0 0H9L4.5 4.5Z" fill="#d8d8d8"/></svg><div class="a tS" style="left:667px;top:13.91px;font-size:17px;color:#e1e4e8;transform:scaleX(0.9619);transform-origin:0 0;">Addins</div><svg class="a" style="left:727px;top:19px;" width="9" height="5" viewBox="0 0 9 5"><path d="M0 0H9L4.5 4.5Z" fill="#d8d8d8"/></svg><div class="a" style="left:748px;top:8px;width:1px;height:23px;background:#0e1012;"></div><div class="a" style="left:749px;top:9px;width:1px;height:21px;background:#4f545a;"></div><svg class="a" style="left:760px;top:10px;" width="23" height="21" viewBox="0 0 23 21"><rect x="0.5" y="0.5" width="22" height="20" fill="#2a2e33"/><rect x="1.5" y="1.5" width="13" height="18" fill="#9a9da1"/><rect x="16.5" y="1.5" width="5" height="18" fill="#9a9da1"/></svg><svg class="a" style="left:1755px;top:7px;" width="26" height="26" viewBox="0 0 26 26"><polygon points="12.5,2.0 3.0,7.5 3.0,18.5 12.5,24.0 22.0,18.5 22.0,7.5" fill="#8dbbd3" stroke="#6aa9c6" stroke-width="1"/><path d="M12.5 15.0L3.0 9.5M12.5 15.0L22.0 9.5M12.5 15.0V24.0" stroke="#6fb0cc" stroke-width="0.7"/><text x="12.5" y="18.0" font-family="Liberation Serif" font-size="15.0" fill="#2b5fa5" text-anchor="middle">R</text></svg><div class="a tS" style="left:1786px;top:14.01px;font-size:17px;color:#e1e4e8;transform:scaleX(0.9740);transform-origin:0 0;">rstudiothemes</div><svg class="a" style="left:1900px;top:19px;" width="9" height="5" viewBox="0 0 9 5"><path d="M0 0H9L4.5 4.5Z" fill="#d8d8d8"/></svg><div class="a" style="left:95px;top:797px;width:109px;height:35px;background:#0c2035;border-radius:3px 3px 0 0"></div><div class="a" style="left:96px;top:798px;width:107px;height:33px;background:#393d42;border-radius:2px 2px 0 0"></div><div class="a tS" style="left:110px;top:806.41px;font-size:17px;color:#e1e4e8;transform:scaleX(0.9340);transform-origin:0 0;">Terminal</div><svg class="a" style="left:178px;top:809px;" width="11" height="11" viewBox="0 0 11 11"><path d="M1.5 1.5L9.5 9.5M9.5 1.5L1.5 9.5" stroke="#6e7277" stroke-width="2.6"/></svg><div class="a" style="left:203px;top:797px;width:107px;height:35px;background:#0c2035;border-radius:3px 3px 0 0"></div><div class="a" style="left:204px;top:798px;width:105px;height:33px;background:#393d42;border-radius:2px 2px 0 0"></div><div class="a tS" style="left:218px;top:806.41px;font-size:17px;color:#e1e4e8;transform:scaleX(0.9447);transform-origin:0 0;">Markers</div><svg class="a" style="left:284px;top:809px;" width="11" height="11" viewBox="0 0 11 11"><path d="M1.5 1.5L9.5 9.5M9.5 1.5L1.5 9.5" stroke="#6e7277" stroke-width="2.6"/></svg><div class="a" style="left:309px;top:797px;width:172px;height:35px;background:#0c2035;border-radius:3px 3px 0 0"></div><div class="a" style="left:310px;top:798px;width:170px;height:33px;background:#393d42;border-radius:2px 2px 0 0"></div><div class="a tS" style="left:324px;top:806.41px;font-size:17px;color:#e1e4e8;transform:scaleX(0.9440);transform-origin:0 0;">Background Jobs</div><svg class="a" style="left:455px;top:809px;" width="11" height="11" viewBox="0 0 11 11"><path d="M1.5 1.5L9.5 9.5M9.5 1.5L1.5 9.5" stroke="#6e7277" stroke-width="2.6"/></svg><div class="a" style="left:12px;top:797px;width:84px;height:36px;background:#0c2035;border-radius:3px 3px 0 0"></div><div class="a" style="left:13px;top:798px;width:82px;height:35px;background:#464d56;border-radius:2px 2px 0 0"></div><div class="a tS" style="left:26px;top:806.41px;font-size:17px;color:#c8e4ff;transform:scaleX(0.8978);transform-origin:0 0;font-style:italic;">Console</div><svg class="a" style="left:1326px;top:808px;" width="50" height="20" viewBox="0 0 50 20"><rect x="0.5" y="9.5" width="20.5" height="9" rx="2" fill="#8f989f"/><rect x="2" y="13.5" width="17.5" height="3.5" fill="#282c34"/><rect x="27.5" y="0.5" width="20.5" height="18" rx="2" fill="#8f989f"/><rect x="29" y="5" width="17.5" height="12" fill="#282c34"/></svg><svg class="a" style="left:24px;top:837px;" width="28" height="22" viewBox="0 0 28 22"><ellipse cx="11.5" cy="8" rx="10" ry="6.6" fill="none" stroke="#c8ccd0" stroke-width="3"/><path d="M9.5 6.5H19C23.5 6.5 23.5 13 19 13H14.5M18 13L23.5 20.5M11 6.5V20.5" fill="none" stroke="#2a7bd8" stroke-width="4.2"/></svg><svg class="a" style="left:59px;top:850px;" width="9" height="5" viewBox="0 0 9 5"><path d="M0 0H9L4.5 4.5Z" fill="#d8d8d8"/></svg><div class="a tS" style="left:76px;top:842.41px;font-size:17px;color:#e1e4e8;transform:scaleX(0.9487);transform-origin:0 0;">R 4.5.2</div><div class="a tS" style="left:137px;top:842.41px;font-size:17px;color:#e1e4e8;">·</div><div class="a tS" style="left:151px;top:842.41px;font-size:17px;color:#e1e4e8;transform:scaleX(0.9939);transform-origin:0 0;">~/R/Projects/rstudiothemes/</div><svg class="a" style="left:363px;top:843px;" width="20" height="13" viewBox="0 0 20 13"><path d="M1 12.5C2 6 6 4.5 10.5 4.5V0.5L19 6.5L10.5 12.5V8.5C6 8.5 3 9.5 1 12.5Z" fill="#c4c8cc"/></svg><svg class="a" style="left:1299px;top:838px;" width="22" height="21" viewBox="0 0 22 21"><circle cx="10.5" cy="10" r="9" fill="none" stroke="#5cb85c" stroke-width="2"/><path d="M10.5 10C8.5 7 5.5 7 5.5 10C5.5 13 8.5 13 10.5 10C12.5 7 15.5 7 15.5 10C15.5 13 12.5 13 10.5 10Z" fill="none" stroke="#5cb85c" stroke-width="1.5"/></svg><svg class="a" style="left:1325px;top:838px;" width="21" height="21" viewBox="0 0 21 21"><circle cx="8" cy="8" r="5.8" fill="none" stroke="#a8adb2" stroke-width="3"/><path d="M12 12L19 19" stroke="#a8adb2" stroke-width="3.6"/></svg><svg class="a" style="left:1351px;top:837px;" width="31" height="25" viewBox="0 0 31 25"><path d="M16 12.5L28.5 1.5" stroke="#a8adb2" stroke-width="2.6" stroke-linecap="round"/><path d="M17.5 11L12 8.5C8 12 4 17.5 1 19.5C4 20.5 8 22 12 22C14 19 17 15.5 18.5 13Z" fill="#a8adb2"/><path d="M6 18L13 11M9 20L15 13" stroke="#393e43" stroke-width="0.7"/></svg><div class="a tM" style="left:22px;top:866.70px;height:24px;font-size:20px;line-height:24px;color:#e1e4e8;">• GitHub Dark</div><div class="a tM" style="left:22px;top:890.70px;height:24px;font-size:20px;line-height:24px;color:#f97583;">[n,k,q]:</div><div class="a" style="left:130px;top:889px;width:3px;height:25px;background:#4f5964;"></div><div class="a" style="left:1517px;top:47px;width:80px;height:35px;background:#0c2035;border-radius:3px 3px 0 0"></div><div class="a" style="left:1518px;top:48px;width:78px;height:33px;background:#393d42;border-radius:2px 2px 0 0"></div><div class="a tS" style="left:1532px;top:57.41px;font-size:17px;color:#e1e4e8;transform:scaleX(0.9642);transform-origin:0 0;">History</div><div class="a" style="left:1596px;top:47px;width:119px;height:35px;background:#0c2035;border-radius:3px 3px 0 0"></div><div class="a" style="left:1597px;top:48px;width:117px;height:33px;background:#393d42;border-radius:2px 2px 0 0"></div><div class="a tS" style="left:1610px;top:57.41px;font-size:17px;color:#e1e4e8;transform:scaleX(0.9629);transform-origin:0 0;">Connections</div><div class="a" style="left:1714px;top:47px;width:65px;height:35px;background:#0c2035;border-radius:3px 3px 0 0"></div><div class="a" style="left:1715px;top:48px;width:63px;height:33px;background:#393d42;border-radius:2px 2px 0 0"></div><div class="a tS" style="left:1729px;top:57.41px;font-size:17px;color:#e1e4e8;transform:scaleX(0.9259);transform-origin:0 0;">Build</div><div class="a" style="left:1778px;top:47px;width:49px;height:35px;background:#0c2035;border-radius:3px 3px 0 0"></div><div class="a" style="left:1779px;top:48px;width:47px;height:33px;background:#393d42;border-radius:2px 2px 0 0"></div><div class="a tS" style="left:1792px;top:57.41px;font-size:17px;color:#e1e4e8;transform:scaleX(0.9667);transform-origin:0 0;">Git</div><div class="a" style="left:1400px;top:47px;width:118px;height:36px;background:#0c2035;border-radius:3px 3px 0 0"></div><div class="a" style="left:1401px;top:48px;width:116px;height:35px;background:#464d56;border-radius:2px 2px 0 0"></div><div class="a tS" style="left:1414px;top:57.41px;font-size:17px;color:#c8e4ff;transform:scaleX(0.9431);transform-origin:0 0;font-style:italic;">Environment</div><svg class="a" style="left:1845px;top:58px;" width="50" height="20" viewBox="0 0 50 20"><rect x="0.5" y="9.5" width="20.5" height="9" rx="2" fill="#8f989f"/><rect x="2" y="13.5" width="17.5" height="3.5" fill="#282c34"/><rect x="27.5" y="0.5" width="20.5" height="18" rx="2" fill="#8f989f"/><rect x="29" y="5" width="17.5" height="12" fill="#282c34"/></svg><svg class="a" style="left:1409px;top:88px;" width="33" height="23" viewBox="0 0 33 23"><path d="M4 7H11L13 9H21V21H4Z" fill="#d8d8d8"/><path d="M1 11.5H18L23 21.5H5Z" fill="#e7c164" stroke="#b98f2a" stroke-width="0.8"/><path d="M11 14C13 8 18 6.5 23 7V3.5L30 8.5L23 13.5V10.5C19 10 14 11 11 14Z" fill="#24a07a"/></svg><svg class="a" style="left:1451px;top:92px;" width="19" height="19" viewBox="0 0 19 19"><rect x="0.5" y="0.5" width="18" height="18" rx="1.5" fill="#76a3d6"/><rect x="3" y="1" width="13" height="7" fill="#e8e8e8"/><rect x="4.5" y="11.5" width="10" height="7" fill="#e8e8e8"/><rect x="7" y="13" width="3" height="5.5" fill="#76a3d6"/></svg><div class="a" style="left:1483px;top:87px;width:1px;height:23px;background:#0e1012;"></div><div class="a" style="left:1484px;top:88px;width:1px;height:21px;background:#4f545a;"></div><svg class="a" style="left:1493px;top:88px;" width="30" height="22" viewBox="0 0 30 22"><rect x="0.5" y="3" width="19" height="17.5" rx="1" fill="#e0e0e0"/><g stroke="#a9adb1" stroke-width="0.9"><path d="M0.5 7.5H19.5M0.5 12H19.5M0.5 16.5H19.5M5.5 3V20.5M10.5 3V20.5M15 3V20.5"/></g><path d="M10 15C12 9 17 7 22 7.5V3.5L29 9L22 14.5V11C18 10.5 13 11.5 10 15Z" fill="#24a07a"/></svg><svg class="a" style="left:1530px;top:99px;" width="9" height="5" viewBox="0 0 9 5"><path d="M0 0H9L4.5 4.5Z" fill="#d8d8d8"/></svg><div class="a" style="left:1544px;top:87px;width:1px;height:23px;background:#0e1012;"></div><div class="a" style="left:1545px;top:88px;width:1px;height:21px;background:#4f545a;"></div><svg class="a" style="left:1553px;top:90px;" width="21" height="20" viewBox="0 0 21 20"><circle cx="10" cy="10" r="9.5" fill="#e8832a"/><path d="M10 10V0.5A9.5 9.5 0 0 0 3.5 3Z" fill="#e8e8e8"/><circle cx="10" cy="10" r="2" fill="#393e43"/></svg><div class="a tS" style="left:1581px;top:93.21px;font-size:17px;color:#e1e4e8;transform:scaleX(0.9450);transform-origin:0 0;">26 MiB</div><svg class="a" style="left:1642px;top:99px;" width="9" height="5" viewBox="0 0 9 5"><path d="M0 0H9L4.5 4.5Z" fill="#d8d8d8"/></svg><div class="a" style="left:1662px;top:87px;width:1px;height:23px;background:#0e1012;"></div><div class="a" style="left:1663px;top:88px;width:1px;height:21px;background:#4f545a;"></div><svg class="a" style="left:1672px;top:86px;" width="26" height="25" viewBox="0 0 26 25"><path d="M23.3 1.8L16.8 8.3" stroke="#c8604f" stroke-width="2.8" stroke-linecap="round"/><path d="M0.5 15.5L11 8C14 7 17.5 8.5 18 11C18.3 14 17 17 15.5 19L9.5 24Z" fill="#d2bd78"/><path d="M12.5 11L16.5 16M10 13L14 18.5" stroke="#a0702a" stroke-width="1.3"/></svg><svg class="a" style="left:1773px;top:93px;" width="18" height="16" viewBox="0 0 18 16"><g stroke="#c8cbce" stroke-width="1.6"><path d="M0 1H17M0 5H17M0 9.7H17M0 14.5H17"/></g></svg><div class="a tS" style="left:1800px;top:94.41px;font-size:17px;color:#e1e4e8;transform:scaleX(0.9072);transform-origin:0 0;">List</div><svg class="a" style="left:1833px;top:99px;" width="9" height="5" viewBox="0 0 9 5"><path d="M0 0H9L4.5 4.5Z" fill="#d8d8d8"/></svg><div class="a" style="left:1854px;top:87px;width:1px;height:23px;background:#0e1012;"></div><div class="a" style="left:1855px;top:88px;width:1px;height:21px;background:#4f545a;"></div><svg class="a" style="left:1864px;top:87px;" width="24" height="24" viewBox="0 0 24 24"><path d="M18.6 15.3A7.8 7.8 0 1 1 16.5 6" fill="none" stroke="#bfc3ca" stroke-width="5"/><path d="M12 10.8H22V1.2Z" fill="#bfc3ca"/></svg><svg class="a" style="left:1894px;top:99px;" width="9" height="5" viewBox="0 0 9 5"><path d="M0 0H9L4.5 4.5Z" fill="#d8d8d8"/></svg><div class="a tS" style="left:1413px;top:124.21px;font-size:17px;color:#e1e4e8;transform:scaleX(0.8146);transform-origin:0 0;">R</div><svg class="a" style="left:1432px;top:130px;" width="9" height="5" viewBox="0 0 9 5"><path d="M0 0H9L4.5 4.5Z" fill="#d8d8d8"/></svg><div class="a" style="left:1452px;top:119px;width:1px;height:23px;background:#0e1012;"></div><div class="a" style="left:1453px;top:120px;width:1px;height:21px;background:#4f545a;"></div><svg class="a" style="left:1465px;top:121px;" width="25" height="23" viewBox="0 0 25 23"><rect x="6.5" y="0.5" width="13" height="13" rx="2" fill="#b07cc6"/><rect x="9.5" y="8" width="14" height="14" rx="2" fill="#5b8fd6"/><rect x="0.5" y="5.5" width="13.5" height="13.5" rx="2" fill="#9bb67a"/></svg><div class="a tS" style="left:1496px;top:125.71px;font-size:17px;color:#e1e4e8;transform:scaleX(0.9645);transform-origin:0 0;">Global Environment</div><svg class="a" style="left:1650px;top:131px;" width="9" height="5" viewBox="0 0 9 5"><path d="M0 0H9L4.5 4.5Z" fill="#d8d8d8"/></svg><div class="a" style="left:1714px;top:122px;width:180px;height:24px;background:#24282c;border:1px solid #2b3644;border-radius:4px"></div><svg class="a" style="left:1722px;top:125px;" width="21" height="20" viewBox="0 0 21 20"><circle cx="7.5" cy="7.5" r="5.5" fill="none" stroke="#c0c4c8" stroke-width="2.8"/><path d="M11.5 11.5L19 18.5" stroke="#c0c4c8" stroke-width="3.4"/></svg><div class="a" style="left:1401px;top:151px;width:506px;height:30px;background:#393e43;"></div><div class="a" style="left:1401px;top:181px;width:506px;height:1px;background:#0c2035;"></div><div class="a" style="left:1401px;top:182px;width:506px;height:29px;background:#24282c;"></div><div class="a" style="left:1401px;top:211px;width:506px;height:1px;background:#0c2035;"></div><div class="a" style="left:1562px;top:182px;width:1px;height:29px;background:#0c2035;"></div><div class="a" style="left:1401px;top:212px;width:506px;height:29px;background:#24282c;"></div><div class="a" style="left:1401px;top:241px;width:506px;height:1px;background:#0c2035;"></div><div class="a" style="left:1562px;top:212px;width:1px;height:29px;background:#0c2035;"></div><div class="a" style="left:1401px;top:242px;width:506px;height:29px;background:#393e43;"></div><div class="a" style="left:1401px;top:271px;width:506px;height:1px;background:#0c2035;"></div><div class="a" style="left:1401px;top:272px;width:506px;height:27px;background:#24282c;"></div><div class="a" style="left:1401px;top:299px;width:506px;height:1px;background:#0c2035;"></div><div class="a" style="left:1562px;top:272px;width:1px;height:27px;background:#0c2035;"></div><div class="a" style="left:1401px;top:300px;width:506px;height:27px;background:#24282c;"></div><div class="a" style="left:1401px;top:327px;width:506px;height:1px;background:#0c2035;"></div><div class="a" style="left:1562px;top:300px;width:1px;height:27px;background:#0c2035;"></div><div class="a tM" style="left:1409px;top:155.70px;height:24px;font-size:20px;line-height:24px;color:#e1e4e8;">Data</div><div class="a tM" style="left:1409px;top:245.70px;height:24px;font-size:20px;line-height:24px;color:#e1e4e8;">Values</div><svg class="a" style="left:1408px;top:186px;" width="19" height="19" viewBox="0 0 19 19"><circle cx="9.5" cy="9.5" r="8.6" fill="#8dbde6"/><path d="M7.5 4.5L12.5 9.5L7.5 14.5Z" fill="#fff"/></svg><svg class="a" style="left:1408px;top:216px;" width="19" height="19" viewBox="0 0 19 19"><circle cx="9.5" cy="9.5" r="8.6" fill="#8dbde6"/><path d="M7.5 4.5L12.5 9.5L7.5 14.5Z" fill="#fff"/></svg><div class="a tM" style="left:1432px;top:185.70px;height:24px;font-size:20px;line-height:24px;color:#e1e4e8;">a_list</div><div class="a tM" style="left:1432px;top:215.70px;height:24px;font-size:20px;line-height:24px;color:#e1e4e8;">penguins</div><div class="a tM" style="left:1432px;top:274.30px;height:24px;font-size:20px;line-height:24px;color:#e1e4e8;">a_number</div><div class="a tM" style="left:1432px;top:302.10px;height:24px;font-size:20px;line-height:24px;color:#e1e4e8;">chars</div><div class="a tM" style="left:1570px;top:185.70px;height:24px;font-size:20px;line-height:24px;color:#e1e4e8;">List of  3</div><div class="a tM" style="left:1570px;top:215.70px;height:24px;font-size:20px;line-height:24px;color:#e1e4e8;">344 obs. of 8 variables</div><div class="a tM" style="left:1570px;top:274.30px;height:24px;font-size:20px;line-height:24px;color:#e1e4e8;">int [1:10] 1 2 3 4 5 6 7 8…</div><div class="a tM" style="left:1570px;top:302.10px;height:24px;font-size:20px;line-height:24px;color:#e1e4e8;">chr [1:26] "a" "b" "c" "d"…</div><svg class="a" style="left:1880px;top:186px;" width="21" height="21" viewBox="0 0 21 21"><circle cx="7.5" cy="7.5" r="5.6" fill="none" stroke="#c0c4c8" stroke-width="2.8"/><path d="M11.5 11.5L19 18.5" stroke="#c0c4c8" stroke-width="3.4"/></svg><svg class="a" style="left:1882px;top:216px;" width="21" height="19" viewBox="0 0 21 19"><rect x="0.5" y="0.5" width="20" height="18" rx="1.5" fill="#f0f0f0"/><rect x="0.5" y="0.5" width="20" height="3" rx="1" fill="#bfe0f5"/><g stroke="#a8b0b8" stroke-width="0.7"><path d="M0.5 8H20.5M0.5 13H20.5M7 3.5V18.5M14 3.5V18.5"/></g></svg><div class="a" style="left:1401px;top:445px;width:506px;height:1px;background:#0c2035;"></div><div class="a" style="left:1401px;top:446px;width:506px;height:1px;background:#4e5864;"></div><div class="a" style="left:1458px;top:411px;width:64px;height:35px;background:#0c2035;border-radius:3px 3px 0 0"></div><div class="a" style="left:1459px;top:412px;width:62px;height:33px;background:#393d42;border-radius:2px 2px 0 0"></div><div class="a tS" style="left:1473px;top:422.41px;font-size:17px;color:#e1e4e8;transform:scaleX(0.9261);transform-origin:0 0;">Plots</div><div class="a" style="left:1521px;top:411px;width:95px;height:35px;background:#0c2035;border-radius:3px 3px 0 0"></div><div class="a" style="left:1522px;top:412px;width:93px;height:33px;background:#393d42;border-radius:2px 2px 0 0"></div><div class="a tS" style="left:1536px;top:422.41px;font-size:17px;color:#e1e4e8;transform:scaleX(0.8840);transform-origin:0 0;">Packages</div><div class="a" style="left:1615px;top:411px;width:63px;height:35px;background:#0c2035;border-radius:3px 3px 0 0"></div><div class="a" style="left:1616px;top:412px;width:61px;height:33px;background:#393d42;border-radius:2px 2px 0 0"></div><div class="a tS" style="left:1630px;top:422.41px;font-size:17px;color:#e1e4e8;transform:scaleX(0.9725);transform-origin:0 0;">Help</div><div class="a" style="left:1677px;top:411px;width:78px;height:35px;background:#0c2035;border-radius:3px 3px 0 0"></div><div class="a" style="left:1678px;top:412px;width:76px;height:33px;background:#393d42;border-radius:2px 2px 0 0"></div><div class="a tS" style="left:1691px;top:422.41px;font-size:17px;color:#e1e4e8;transform:scaleX(0.9486);transform-origin:0 0;">Viewer</div><div class="a" style="left:1753px;top:411px;width:77px;height:35px;background:#0c2035;border-radius:3px 0 0 0;overflow:hidden"></div><div class="a" style="left:1754px;top:412px;width:76px;height:33px;background:#393d42;border-radius:2px 0 0 0;overflow:hidden"><div class="tS" style="position:absolute;left:14px;top:10.4px;font-size:17px;color:#e1e4e8;transform:scaleX(0.9039);transform-origin:0 0">Presentation</div></div><div class="a" style="left:1400px;top:411px;width:59px;height:36px;background:#0c2035;border-radius:3px 3px 0 0"></div><div class="a" style="left:1401px;top:412px;width:57px;height:35px;background:#464d56;border-radius:2px 2px 0 0"></div><div class="a tS" style="left:1413px;top:422.41px;font-size:17px;color:#c8e4ff;transform:scaleX(0.8637);transform-origin:0 0;font-style:italic;">Files</div><svg class="a" style="left:1845px;top:423px;" width="50" height="20" viewBox="0 0 50 20"><rect x="0.5" y="9.5" width="20.5" height="9" rx="2" fill="#8f989f"/><rect x="2" y="13.5" width="17.5" height="3.5" fill="#282c34"/><rect x="27.5" y="0.5" width="20.5" height="18" rx="2" fill="#8f989f"/><rect x="29" y="5" width="17.5" height="12" fill="#282c34"/></svg><svg class="a" style="left:1409px;top:453px;" width="30" height="24" viewBox="0 0 30 24"><path d="M9 6H15L17 8H27V23H9Z" fill="#e7c164" stroke="#b98f2a" stroke-width="0.8"/><path d="M7 11H27V23H9Z" fill="#f1d27f"/><circle cx="8.5" cy="8.5" r="7.5" fill="#1c9c72"/><path d="M4.2 8.5H12.8M8.5 4.2V12.8" stroke="#fff" stroke-width="2.6"/></svg><div class="a" style="left:1447px;top:453px;width:1px;height:23px;background:#0e1012;"></div><div class="a" style="left:1448px;top:454px;width:1px;height:21px;background:#4f545a;"></div><svg class="a" style="left:1454px;top:453px;" width="29" height="24" viewBox="0 0 29 24"><rect x="9" y="5" width="18" height="19" fill="#e6e6e6"/><circle cx="8.5" cy="8.5" r="7.5" fill="#1c9c72"/><path d="M4.2 8.5H12.8M8.5 4.2V12.8" stroke="#fff" stroke-width="2.6"/></svg><svg class="a" style="left:1492px;top:464px;" width="9" height="5" viewBox="0 0 9 5"><path d="M0 0H9L4.5 4.5Z" fill="#d8d8d8"/></svg><div class="a" style="left:1507px;top:453px;width:1px;height:23px;background:#0e1012;"></div><div class="a" style="left:1508px;top:454px;width:1px;height:21px;background:#4f545a;"></div><svg class="a" style="left:1514px;top:453px;" width="29" height="24" viewBox="0 0 29 24"><rect x="9" y="5" width="18" height="19" fill="#e6e6e6"/><circle cx="8.5" cy="8.5" r="7.5" fill="#c62828" stroke="#8e1b1b" stroke-width="0.8"/><path d="M5.5 5.5L11.5 11.5M11.5 5.5L5.5 11.5" stroke="#fff" stroke-width="2.4"/></svg><svg class="a" style="left:1554px;top:455px;" width="26" height="22" viewBox="0 0 26 22"><rect x="0.5" y="0.5" width="17" height="15" fill="#d8d8d8" stroke="#aaa" stroke-width="0.6"/><rect x="7" y="6" width="18" height="15.5" fill="#e8e8e8" stroke="#aaa" stroke-width="0.6"/><path d="M5 13H14V9.5L20 14L14 18.5V15H5Z" fill="#1e90d8"/></svg><div class="a" style="left:1589px;top:453px;width:1px;height:23px;background:#0e1012;"></div><div class="a" style="left:1590px;top:454px;width:1px;height:21px;background:#4f545a;"></div><svg class="a" style="left:1603px;top:453px;" width="23" height="23" viewBox="0 0 23 23"><polygon points="22.5,11.5 19.2,14.7 19.3,19.3 14.7,19.2 11.5,22.5 8.3,19.2 3.7,19.3 3.8,14.7 0.5,11.5 3.8,8.3 3.7,3.7 8.3,3.8 11.5,0.5 14.7,3.8 19.3,3.7 19.2,8.3" fill="#3a9fd8"/><circle cx="11.5" cy="11.5" r="7" fill="#3a9fd8"/><circle cx="11.5" cy="11.5" r="3.6" fill="#393e43"/></svg><svg class="a" style="left:1636px;top:464px;" width="9" height="5" viewBox="0 0 9 5"><path d="M0 0H9L4.5 4.5Z" fill="#d8d8d8"/></svg><svg class="a" style="left:1877px;top:451px;" width="24" height="24" viewBox="0 0 24 24"><path d="M18.6 15.3A7.8 7.8 0 1 1 16.5 6" fill="none" stroke="#bfc3ca" stroke-width="5"/><path d="M12 10.8H22V1.2Z" fill="#bfc3ca"/></svg><div class="a" style="left:1408px;top:487px;width:18px;height:18px;background:#d6e4f5;border-radius:3px"></div><svg class="a" style="left:1437px;top:482px;" width="26" height="24" viewBox="0 0 26 24"><path d="M4.5 11V23H21.5V11" fill="#e9e9e9"/><path d="M1 12.5L13 1.5L25 12.5" fill="none" stroke="#d13b2f" stroke-width="2.8"/><rect x="11" y="15" width="4.5" height="8" fill="#b0702a"/></svg><div class="a tS" style="left:1474px;top:487.21px;font-size:17px;color:#e1e4e8;transform:scaleX(0.9703);transform-origin:0 0;">Home</div><svg class="a" style="left:1527px;top:487px;" width="10" height="16" viewBox="0 0 10 16"><path d="M1.5 1L8 7.5L1.5 14" fill="none" stroke="#e1e4e8" stroke-width="2"/></svg><svg class="a" style="left:1563px;top:487px;" width="10" height="16" viewBox="0 0 10 16"><path d="M1.5 1L8 7.5L1.5 14" fill="none" stroke="#e1e4e8" stroke-width="2"/></svg><svg class="a" style="left:1646px;top:487px;" width="10" height="16" viewBox="0 0 10 16"><path d="M1.5 1L8 7.5L1.5 14" fill="none" stroke="#e1e4e8" stroke-width="2"/></svg><svg class="a" style="left:1775px;top:487px;" width="10" height="16" viewBox="0 0 10 16"><path d="M1.5 1L8 7.5L1.5 14" fill="none" stroke="#e1e4e8" stroke-width="2"/></svg><div class="a tS" style="left:1544px;top:487.21px;font-size:17px;color:#e1e4e8;transform:scaleX(0.8553);transform-origin:0 0;">R</div><div class="a tS" style="left:1579px;top:487.21px;font-size:17px;color:#e1e4e8;transform:scaleX(0.9363);transform-origin:0 0;">Projects</div><div class="a tS" style="left:1663px;top:487.21px;font-size:17px;color:#e1e4e8;transform:scaleX(0.9693);transform-origin:0 0;">rstudiothemes</div><div class="a tS" style="left:1792px;top:487.21px;font-size:17px;color:#e1e4e8;transform:scaleX(0.8553);transform-origin:0 0;">R</div><svg class="a" style="left:1843px;top:481px;" width="26" height="26" viewBox="0 0 26 26"><polygon points="12.5,2.0 3.0,7.5 3.0,18.5 12.5,24.0 22.0,18.5 22.0,7.5" fill="#8dbbd3" stroke="#6aa9c6" stroke-width="1"/><path d="M12.5 15.0L3.0 9.5M12.5 15.0L22.0 9.5M12.5 15.0V24.0" stroke="#6fb0cc" stroke-width="0.7"/><text x="12.5" y="18.0" font-family="Liberation Serif" font-size="15.0" fill="#2b5fa5" text-anchor="middle">R</text></svg><div class="a" style="left:1878px;top:481px;width:1px;height:29px;background:#0c2035;"></div><svg class="a" style="left:1886px;top:500px;" width="16" height="5" viewBox="0 0 16 5"><circle cx="2" cy="2.5" r="1.6" fill="#e1e4e8"/><circle cx="8" cy="2.5" r="1.6" fill="#e1e4e8"/><circle cx="14" cy="2.5" r="1.6" fill="#e1e4e8"/></svg><div class="a" style="left:1401px;top:478px;width:506px;height:1px;background:#0c2035;"></div><div class="a" style="left:1401px;top:479px;width:506px;height:1px;background:#4e5a66;"></div><div class="a" style="left:1401px;top:510px;width:506px;height:1px;background:#0c2035;"></div><div class="a" style="left:1401px;top:538px;width:506px;height:1px;background:#5a6068;"></div><div class="a" style="left:1445px;top:511px;width:1px;height:27px;background:#5a6068;"></div><div class="a" style="left:1484px;top:511px;width:1px;height:27px;background:#5a6068;"></div><div class="a" style="left:1790px;top:511px;width:1px;height:27px;background:#5a6068;"></div><svg class="a" style="left:1491px;top:519px;" width="16" height="11" viewBox="0 0 16 11"><path d="M0.5 10.5L7.5 0.5L14.5 10.5Z" fill="#8e959c"/></svg><div class="a tS" style="left:1514px;top:518.41px;font-size:17px;color:#e1e4e8;transform:scaleX(0.9593);transform-origin:0 0;">Name</div><div class="a tS" style="left:1794px;top:518.41px;font-size:17px;color:#e1e4e8;transform:scaleX(0.8618);transform-origin:0 0;">Size</div><svg class="a" style="left:1456px;top:544px;" width="22" height="21" viewBox="0 0 22 21"><path d="M1 9L8 0.5L15 9H10.5V14.5H21V19.5H5.5V9Z" fill="#2eaa5e"/></svg><div class="a tS" style="left:1494px;top:549.41px;font-size:17px;color:#bccdf0;">..</div><div class="a" style="left:1418px;top:583px;width:19px;height:19px;background:#d6e4f5;border-radius:3px"></div><svg class="a" style="left:1455px;top:579px;" width="24" height="23" viewBox="0 0 24 23"><path d="M4.5 0.5H16.5L22.5 6.5V22H4.5Z" fill="#e6e6e6" stroke="#1a1a1a" stroke-opacity="0.35"/><path d="M16.5 0.5V6.5H22.5" fill="#d0d0d0" stroke="#9a9a9a" stroke-width="0.8"/><circle cx="6.5" cy="10" r="6.4" fill="#4a77a8"/><text x="6.6000000000000005" y="13.78" font-family="Liberation Sans" font-size="10.5" font-weight="bold" fill="#f0f0f0" text-anchor="middle">R</text></svg><div class="a tS" style="left:1493px;top:585.41px;font-size:17px;color:#bccdf0;transform:scaleX(1.0730);transform-origin:0 0;">convert-tm-to-vs.R</div><div class="a tS" style="left:1813px;top:585.41px;font-size:17px;color:#e1e4e8;transform:scaleX(0.9624);transform-origin:0 0;">11.6 KB</div><div class="a" style="left:1418px;top:618px;width:19px;height:19px;background:#d6e4f5;border-radius:3px"></div><svg class="a" style="left:1455px;top:614px;" width="24" height="23" viewBox="0 0 24 23"><path d="M4.5 0.5H16.5L22.5 6.5V22H4.5Z" fill="#e6e6e6" stroke="#1a1a1a" stroke-opacity="0.35"/><path d="M16.5 0.5V6.5H22.5" fill="#d0d0d0" stroke="#9a9a9a" stroke-width="0.8"/><circle cx="6.5" cy="10" r="6.4" fill="#4a77a8"/><text x="6.6000000000000005" y="13.78" font-family="Liberation Sans" font-size="10.5" font-weight="bold" fill="#f0f0f0" text-anchor="middle">R</text></svg><div class="a tS" style="left:1493px;top:620.41px;font-size:17px;color:#bccdf0;transform:scaleX(1.0586);transform-origin:0 0;">convert-to-rs.R</div><div class="a tS" style="left:1813px;top:620.41px;font-size:17px;color:#e1e4e8;transform:scaleX(0.9423);transform-origin:0 0;">12.8 KB</div><div class="a" style="left:1418px;top:653px;width:19px;height:19px;background:#d6e4f5;border-radius:3px"></div><svg class="a" style="left:1455px;top:649px;" width="24" height="23" viewBox="0 0 24 23"><path d="M4.5 0.5H16.5L22.5 6.5V22H4.5Z" fill="#e6e6e6" stroke="#1a1a1a" stroke-opacity="0.35"/><path d="M16.5 0.5V6.5H22.5" fill="#d0d0d0" stroke="#9a9a9a" stroke-width="0.8"/><circle cx="6.5" cy="10" r="6.4" fill="#4a77a8"/><text x="6.6000000000000005" y="13.78" font-family="Liberation Sans" font-size="10.5" font-weight="bold" fill="#f0f0f0" text-anchor="middle">R</text></svg><div class="a tS" style="left:1493px;top:655.41px;font-size:17px;color:#bccdf0;transform:scaleX(1.0694);transform-origin:0 0;">convert-vs-to-tm.R</div><div class="a tS" style="left:1813px;top:655.41px;font-size:17px;color:#e1e4e8;transform:scaleX(0.9209);transform-origin:0 0;">7.9 KB</div><div class="a" style="left:1418px;top:688px;width:19px;height:19px;background:#d6e4f5;border-radius:3px"></div><svg class="a" style="left:1455px;top:684px;" width="24" height="23" viewBox="0 0 24 23"><path d="M4.5 0.5H16.5L22.5 6.5V22H4.5Z" fill="#e6e6e6" stroke="#1a1a1a" stroke-opacity="0.35"/><path d="M16.5 0.5V6.5H22.5" fill="#d0d0d0" stroke="#9a9a9a" stroke-width="0.8"/><circle cx="6.5" cy="10" r="6.4" fill="#4a77a8"/><text x="6.6000000000000005" y="13.78" font-family="Liberation Sans" font-size="10.5" font-weight="bold" fill="#f0f0f0" text-anchor="middle">R</text></svg><div class="a tS" style="left:1493px;top:690.41px;font-size:17px;color:#bccdf0;transform:scaleX(1.0417);transform-origin:0 0;">generate-uuid.R</div><div class="a tS" style="left:1813px;top:690.41px;font-size:17px;color:#e1e4e8;transform:scaleX(0.9225);transform-origin:0 0;">2 KB</div><div class="a" style="left:1418px;top:723px;width:19px;height:19px;background:#d6e4f5;border-radius:3px"></div><svg class="a" style="left:1455px;top:719px;" width="24" height="23" viewBox="0 0 24 23"><path d="M4.5 0.5H16.5L22.5 6.5V22H4.5Z" fill="#e6e6e6" stroke="#1a1a1a" stroke-opacity="0.35"/><path d="M16.5 0.5V6.5H22.5" fill="#d0d0d0" stroke="#9a9a9a" stroke-width="0.8"/><circle cx="6.5" cy="10" r="6.4" fill="#4a77a8"/><text x="6.6000000000000005" y="13.78" font-family="Liberation Sans" font-size="10.5" font-weight="bold" fill="#f0f0f0" text-anchor="middle">R</text></svg><div class="a tS" style="left:1493px;top:725.41px;font-size:17px;color:#bccdf0;transform:scaleX(1.0584);transform-origin:0 0;">on-rstudio.R</div><div class="a tS" style="left:1813px;top:725.41px;font-size:17px;color:#e1e4e8;transform:scaleX(0.9679);transform-origin:0 0;">899 B</div><div class="a" style="left:1418px;top:758px;width:19px;height:19px;background:#d6e4f5;border-radius:3px"></div><svg class="a" style="left:1455px;top:754px;" width="24" height="23" viewBox="0 0 24 23"><path d="M4.5 0.5H16.5L22.5 6.5V22H4.5Z" fill="#e6e6e6" stroke="#1a1a1a" stroke-opacity="0.35"/><path d="M16.5 0.5V6.5H22.5" fill="#d0d0d0" stroke="#9a9a9a" stroke-width="0.8"/><circle cx="6.5" cy="10" r="6.4" fill="#4a77a8"/><text x="6.6000000000000005" y="13.78" font-family="Liberation Sans" font-size="10.5" font-weight="bold" fill="#f0f0f0" text-anchor="middle">R</text></svg><div class="a tS" style="left:1493px;top:760.41px;font-size:17px;color:#bccdf0;transform:scaleX(1.0585);transform-origin:0 0;">read-tm-theme.R</div><div class="a tS" style="left:1813px;top:760.41px;font-size:17px;color:#e1e4e8;transform:scaleX(0.9225);transform-origin:0 0;">6 KB</div><div class="a" style="left:1418px;top:793px;width:19px;height:19px;background:#d6e4f5;border-radius:3px"></div><svg class="a" style="left:1455px;top:789px;" width="24" height="23" viewBox="0 0 24 23"><path d="M4.5 0.5H16.5L22.5 6.5V22H4.5Z" fill="#e6e6e6" stroke="#1a1a1a" stroke-opacity="0.35"/><path d="M16.5 0.5V6.5H22.5" fill="#d0d0d0" stroke="#9a9a9a" stroke-width="0.8"/><circle cx="6.5" cy="10" r="6.4" fill="#4a77a8"/><text x="6.6000000000000005" y="13.78" font-family="Liberation Sans" font-size="10.5" font-weight="bold" fill="#f0f0f0" text-anchor="middle">R</text></svg><div class="a tS" style="left:1493px;top:795.41px;font-size:17px;color:#bccdf0;transform:scaleX(1.0348);transform-origin:0 0;">read-vs-theme.R</div><div class="a tS" style="left:1813px;top:795.41px;font-size:17px;color:#e1e4e8;transform:scaleX(0.9209);transform-origin:0 0;">5.3 KB</div><div class="a" style="left:1418px;top:828px;width:19px;height:19px;background:#d6e4f5;border-radius:3px"></div><svg class="a" style="left:1455px;top:824px;" width="24" height="23" viewBox="0 0 24 23"><path d="M4.5 0.5H16.5L22.5 6.5V22H4.5Z" fill="#e6e6e6" stroke="#1a1a1a" stroke-opacity="0.35"/><path d="M16.5 0.5V6.5H22.5" fill="#d0d0d0" stroke="#9a9a9a" stroke-width="0.8"/><circle cx="6.5" cy="10" r="6.4" fill="#4a77a8"/><text x="6.6000000000000005" y="13.78" font-family="Liberation Sans" font-size="10.5" font-weight="bold" fill="#f0f0f0" text-anchor="middle">R</text></svg><div class="a tS" style="left:1493px;top:830.41px;font-size:17px;color:#bccdf0;transform:scaleX(1.0447);transform-origin:0 0;">rstudiothemes-actions.R</div><div class="a tS" style="left:1813px;top:830.41px;font-size:17px;color:#e1e4e8;transform:scaleX(0.9209);transform-origin:0 0;">8.9 KB</div><div class="a" style="left:1418px;top:863px;width:19px;height:19px;background:#d6e4f5;border-radius:3px"></div><svg class="a" style="left:1455px;top:859px;" width="24" height="23" viewBox="0 0 24 23"><path d="M4.5 0.5H16.5L22.5 6.5V22H4.5Z" fill="#e6e6e6" stroke="#1a1a1a" stroke-opacity="0.35"/><path d="M16.5 0.5V6.5H22.5" fill="#d0d0d0" stroke="#9a9a9a" stroke-width="0.8"/><circle cx="6.5" cy="10" r="6.4" fill="#4a77a8"/><text x="6.6000000000000005" y="13.78" font-family="Liberation Sans" font-size="10.5" font-weight="bold" fill="#f0f0f0" text-anchor="middle">R</text></svg><div class="a tS" style="left:1493px;top:865.41px;font-size:17px;color:#bccdf0;transform:scaleX(1.0402);transform-origin:0 0;">rstudiothemes-package.R</div><div class="a tS" style="left:1813px;top:865.41px;font-size:17px;color:#e1e4e8;transform:scaleX(0.9679);transform-origin:0 0;">240 B</div><div class="a" style="left:1418px;top:898px;width:19px;height:19px;background:#d6e4f5;border-radius:3px"></div><svg class="a" style="left:1455px;top:894px;" width="24" height="23" viewBox="0 0 24 23"><path d="M4.5 0.5H16.5L22.5 6.5V22H4.5Z" fill="#e6e6e6" stroke="#1a1a1a" stroke-opacity="0.35"/><path d="M16.5 0.5V6.5H22.5" fill="#d0d0d0" stroke="#9a9a9a" stroke-width="0.8"/><circle cx="6.5" cy="10" r="6.4" fill="#4a77a8"/><text x="6.6000000000000005" y="13.78" font-family="Liberation Sans" font-size="10.5" font-weight="bold" fill="#f0f0f0" text-anchor="middle">R</text></svg><div class="a tS" style="left:1493px;top:900.41px;font-size:17px;color:#bccdf0;transform:scaleX(0.9951);transform-origin:0 0;">utils.R</div><div class="a tS" style="left:1813px;top:900.41px;font-size:17px;color:#e1e4e8;transform:scaleX(0.9209);transform-origin:0 0;">3.2 KB</div></body></html>
